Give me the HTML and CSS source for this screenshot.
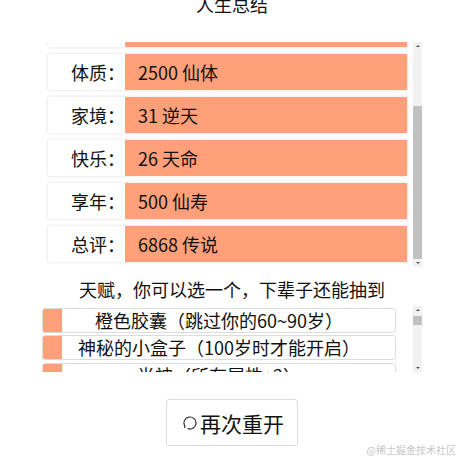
FILE: index.html
```html
<!DOCTYPE html>
<html lang="zh-CN">
<head>
<meta charset="utf-8">
<title>人生总结</title>
<link rel="stylesheet" href="styles.css">
</head>
<body>
<main class="page">
  <h1 class="title">人生总结</h1>
  <div class="stats-box">
    <div class="stats" id="stats">
      <div class="row"><span class="label">颜值：</span><span class="value">10 罕见</span></div>
      <div class="row"><span class="label">智力：</span><span class="value">10 超凡</span></div>
      <div class="row"><span class="label">体质：</span><span class="value">2500 仙体</span></div>
      <div class="row"><span class="label">家境：</span><span class="value">31 逆天</span></div>
      <div class="row"><span class="label">快乐：</span><span class="value">26 天命</span></div>
      <div class="row"><span class="label">享年：</span><span class="value">500 仙寿</span></div>
      <div class="row"><span class="label">总评：</span><span class="value">6868 传说</span></div>
    </div>
    <div class="vscroll" aria-hidden="true">
      <span class="vscroll-btn up"></span>
      <span class="vscroll-track at-end"><span class="thumb stats-thumb"></span></span>
      <span class="vscroll-btn down"></span>
    </div>
  </div>
  <p class="talent-title">天赋，你可以选一个，下辈子还能抽到</p>
  <div class="talents-box">
    <div class="talents">
      <div class="talent">橙色胶囊（跳过你的60~90岁）</div>
      <div class="talent">神秘的小盒子（100岁时才能开启）</div>
      <div class="talent">半神（所有属性+2）</div>
    </div>
    <div class="vscroll" aria-hidden="true">
      <span class="vscroll-btn up"></span>
      <span class="vscroll-track"><span class="thumb talents-thumb"></span></span>
      <span class="vscroll-btn down"></span>
    </div>
  </div>
  <button class="restart" type="button">
    <svg class="restart-icon" width="14" height="14" viewBox="0 0 14 14" aria-hidden="true">
      <path d="M1.8 10 A6 6 0 1 1 4.95 12.64" fill="none" stroke="#333" stroke-width="1.2" stroke-linecap="round"/>
      <path d="M1.8 10 L1.6 11.6" fill="none" stroke="#333" stroke-width="1.1" stroke-linecap="round"/>
    </svg>
    <span>再次重开</span>
  </button>
</main>
<div class="watermark">@稀土掘金技术社区</div>
<script src="script.js"></script>
</body>
</html>
```

FILE: styles.css
```css
html, body {
  margin: 0;
  padding: 0;
  background: #fff;
}

body {
  font-family: "Noto Sans CJK SC", "Noto Sans", sans-serif;
  color: #111;
  text-spacing-trim: space-all;
}

.page {
  width: 380px;
  margin-left: 42px;
  display: flex;
  flex-direction: column;
  align-items: center;
}

.title {
  margin: -8px 0 0;
  font-size: 18px;
  line-height: 24px;
  font-weight: normal;
}

/* ---- stats list ---- */
.stats-box {
  align-self: stretch;
  display: flex;
  height: 225px;
  margin: 26px 0 0 4px;
}

.stats {
  flex: 1;
  box-sizing: border-box;
  height: 100%;
  padding: 8px 6px 5px 2px;
  overflow: hidden;
  display: flex;
  flex-direction: column;
  gap: 7px;
}

.row {
  flex-shrink: 0;
  display: flex;
  height: 36px;
  font-size: 18px;
  line-height: 36px;
  box-shadow: 0 0 3px rgba(0, 0, 0, 0.14);
}

.label {
  width: 77px;
  text-align: right;
  background: #fff;
}

.value {
  flex: 1;
  padding-left: 13px;
  background: #ffa07a;
}

/* ---- talents ---- */
.talent-title {
  margin: 10px 0 0;
  font-size: 18px;
  line-height: 24px;
}

.talents-box {
  align-self: stretch;
  display: flex;
  height: 66px;
  margin-top: 5px;
}

.talents {
  flex: 1;
  box-sizing: border-box;
  height: 100%;
  padding: 1.5px 17px 0 0;
  overflow: hidden;
  display: flex;
  flex-direction: column;
  gap: 2.5px;
}

.talent {
  flex-shrink: 0;
  box-sizing: border-box;
  height: 25px;
  border: 1px solid #dcdcdc;
  border-radius: 3px;
  background: linear-gradient(to right, #ffa07a 19px, #fff 19px);
  font-size: 18px;
  line-height: 23px;
  text-align: center;
  white-space: nowrap;
}

/* ---- drawn scrollbars ---- */
.vscroll {
  width: 9px;
  flex-shrink: 0;
  display: flex;
  flex-direction: column;
  background: #f1f1f1;
}

.vscroll-btn {
  height: 8px;
  flex-shrink: 0;
  display: flex;
  align-items: center;
  justify-content: center;
}

.vscroll-btn::before {
  content: "";
  width: 0;
  height: 0;
  border-left: 2px solid transparent;
  border-right: 2px solid transparent;
}

.vscroll-btn.up::before {
  border-bottom: 2px solid #505050;
}

.vscroll-btn.down::before {
  border-top: 2px solid #505050;
}

.vscroll-track {
  flex: 1;
  display: flex;
  flex-direction: column;
}

.vscroll-track.at-end {
  justify-content: flex-end;
}

.thumb {
  display: block;
  background: #c1c1c1;
}

.stats-thumb {
  height: 153px;
}

.talents-thumb {
  height: 9px;
  margin-top: 2px;
}

/* ---- button ---- */
.restart {
  margin-top: 27px;
  box-sizing: border-box;
  height: 47px;
  padding: 0 13px 0 16px;
  display: inline-flex;
  align-items: center;
  gap: 3px;
  border: 1px solid #dedede;
  border-radius: 3px;
  background: #fff;
  color: #111;
  font-family: inherit;
  font-size: 21px;
  line-height: 30px;
}

.restart-icon {
  display: block;
}

.watermark {
  position: fixed;
  right: 4px;
  bottom: 4px;
  font-size: 10px;
  line-height: 12px;
  color: #c4c4c4;
}
```

FILE: script.js
```js
var stats = document.getElementById('stats');
stats.scrollTop = stats.scrollHeight;
```
